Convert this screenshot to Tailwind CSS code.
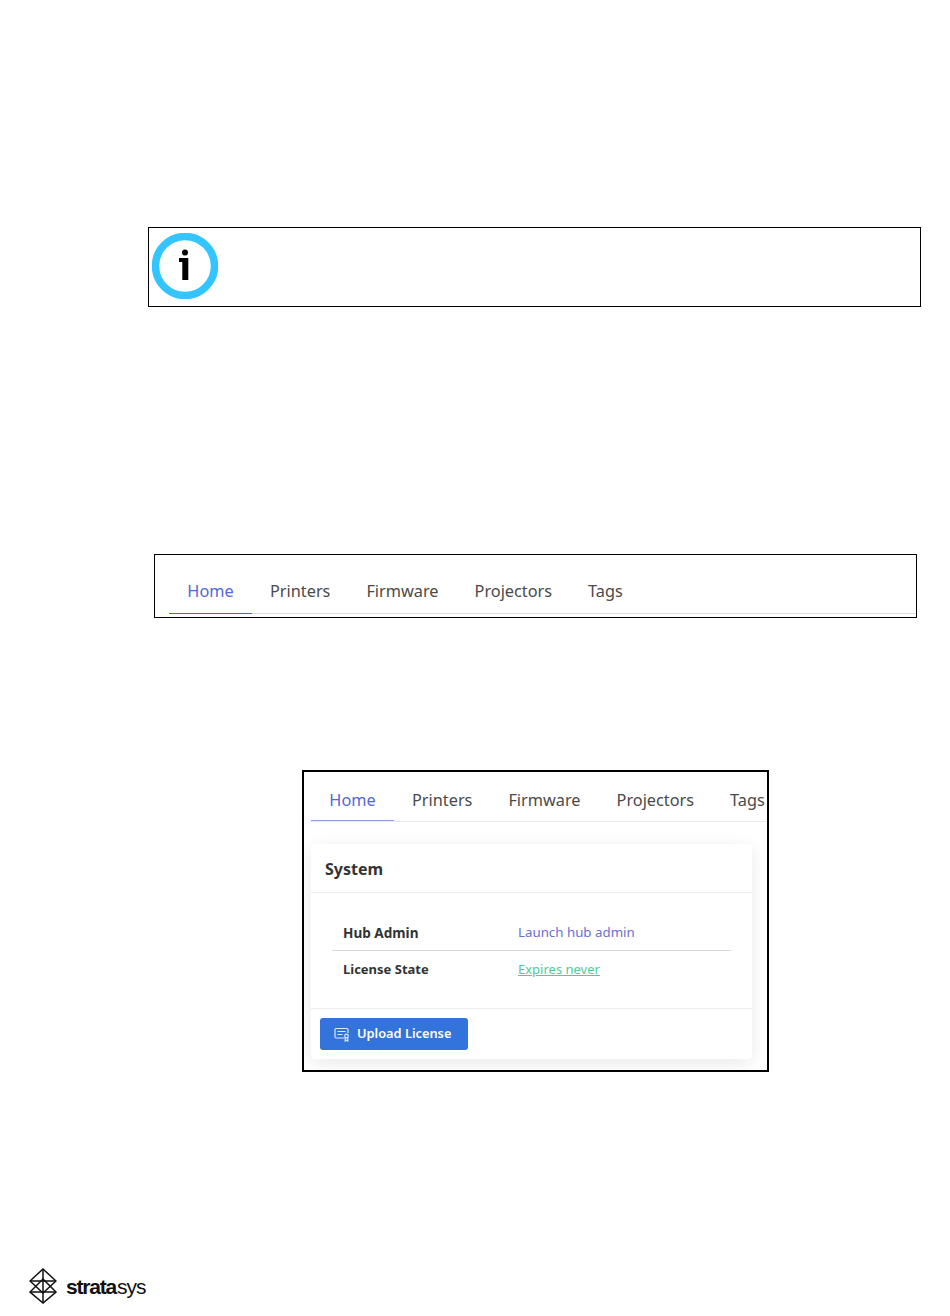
<!DOCTYPE html>
<html lang="en">
<head>
  <meta charset="UTF-8">
  <title>Hub Home</title>
  <script src="https://cdn.jsdelivr.net/npm/@tailwindcss/browser@4"></script>
</head>
<body class="bg-white font-['Noto_Sans',sans-serif]">
  <div class="w-[950px] h-[1316px] overflow-hidden flex flex-col">
    <!-- note box -->
    <div class="ml-[148px] mt-[227px] w-[773px] h-[80px] border border-black flex items-start pl-[3px] pt-[5px]">
      <svg width="66" height="66" viewBox="0 0 66 66">
        <circle cx="33" cy="33" r="29.5" fill="none" stroke="#33c5ff" stroke-width="7.5"/>
        <circle cx="33" cy="19.5" r="3" fill="#000"/>
        <path d="M27 25h9.3v22h-6V29h-3.3z" fill="#000"/>
      </svg>
    </div>

    <!-- tabs -->
    <div class="ml-[154px] mt-[247px] w-[763px] h-[64px] border border-black pl-[14px] pt-[13px]">
      <div class="flex h-[46px] border-b border-[#dcdcdc] text-[16.3px] text-[#4a4a4a]">
        <div class="w-[83px] h-[46px] pt-[1px] shrink-0 border-b border-[#4a63d8] text-[#5468d4] flex items-center justify-center">Home</div>
        <div class="ml-[18px] pt-[1px] shrink-0 flex items-center">Printers</div>
        <div class="ml-[36px] pt-[1px] shrink-0 flex items-center">Firmware</div>
        <div class="ml-[36px] pt-[1px] shrink-0 flex items-center">Projectors</div>
        <div class="ml-[36px] pt-[1px] shrink-0 flex items-center">Tags</div>
      </div>
    </div>

    <!-- home page shot -->
    <div class="ml-[302px] mt-[152px] w-[467px] h-[302px] border-2 border-black pl-[7px] overflow-hidden">
      <div class="flex h-[50px] pt-[8px] border-b border-[#e8e8f0] text-[16.3px] text-[#4a4a4a]">
        <div class="w-[83px] h-[49px] -mt-[8px] pt-[8px] shrink-0 border-b border-[#8f9fe8] text-[#5468d4] flex items-center justify-center">Home</div>
        <div class="ml-[18px] shrink-0 flex items-center">Printers</div>
        <div class="ml-[36px] shrink-0 flex items-center">Firmware</div>
        <div class="ml-[36px] shrink-0 flex items-center">Projectors</div>
        <div class="ml-[36px] shrink-0 flex items-center">Tags</div>
      </div>

      <div class="mt-[22px] w-[441px] h-[215px] bg-white rounded shadow-[0_4px_18px_rgba(0,0,0,0.09)] flex flex-col">
        <div class="h-[49px] pt-[2px] border-b border-[#ececec] flex items-center pl-[14px] text-[16px] font-bold text-[#333]">System</div>
        <div class="h-[115px] px-[21px] pt-[21px] text-[13px]">
          <div class="h-[37px] pt-[2px] flex items-center border-b border-[#d8d8d8] pl-[11px]">
            <span class="w-[175px] text-[13.6px] font-bold text-[#333]">Hub Admin</span>
            <a class="text-[13.3px] text-[#6a6fd8]">Launch hub admin</a>
          </div>
          <div class="h-[37px] flex items-center pl-[11px]">
            <span class="w-[175px] font-bold text-[#333]">License State</span>
            <a class="text-[#55c99a] underline">Expires never</a>
          </div>
        </div>
        <div class="border-t border-[#ececec] pl-[9px] pt-[9px]">
          <button class="w-[148px] h-[32px] bg-[#3273dc] rounded-[3px] text-white text-[12.8px] font-semibold flex items-center pl-[14px] gap-[7px]">
            <svg width="16" height="15" viewBox="0 0 16 15" fill="none" stroke="#dfe9fa" stroke-width="1.2">
              <path d="M10.5 11H2.2A1.2 1.2 0 0 1 1 9.8V2.7a1.2 1.2 0 0 1 1.2-1.2h10.6A1.2 1.2 0 0 1 14 2.7V6"/>
              <path d="M3.5 4.5h8M3.5 7.5h5"/>
              <circle cx="12.5" cy="9" r="1.8"/>
              <path d="M11.2 10.6V14l1.3-.8 1.3.8v-3.4"/>
            </svg>
            Upload License
          </button>
        </div>
      </div>
    </div>

    <!-- footer logo -->
    <div class="ml-[29px] mt-[196px] flex items-center gap-[9px]">
      <svg width="28" height="36" viewBox="0 0 28 36" fill="none" stroke="#111" stroke-width="1.5">
        <path d="M14 1 27 13 14 25 1 13Z"/>
        <path d="M14 11 27 24 14 35 1 24Z"/>
        <path d="M1 13H27M1 24H27M14 1V35"/>
      </svg>
      <div class="text-[21px] leading-none tracking-[-1px] text-[#111] font-['Liberation_Sans',sans-serif]"><span class="font-bold tracking-[-1.2px]">strata</span><span class="ml-[1px]">sys</span></div>
    </div>
  </div>
</body>
</html>
